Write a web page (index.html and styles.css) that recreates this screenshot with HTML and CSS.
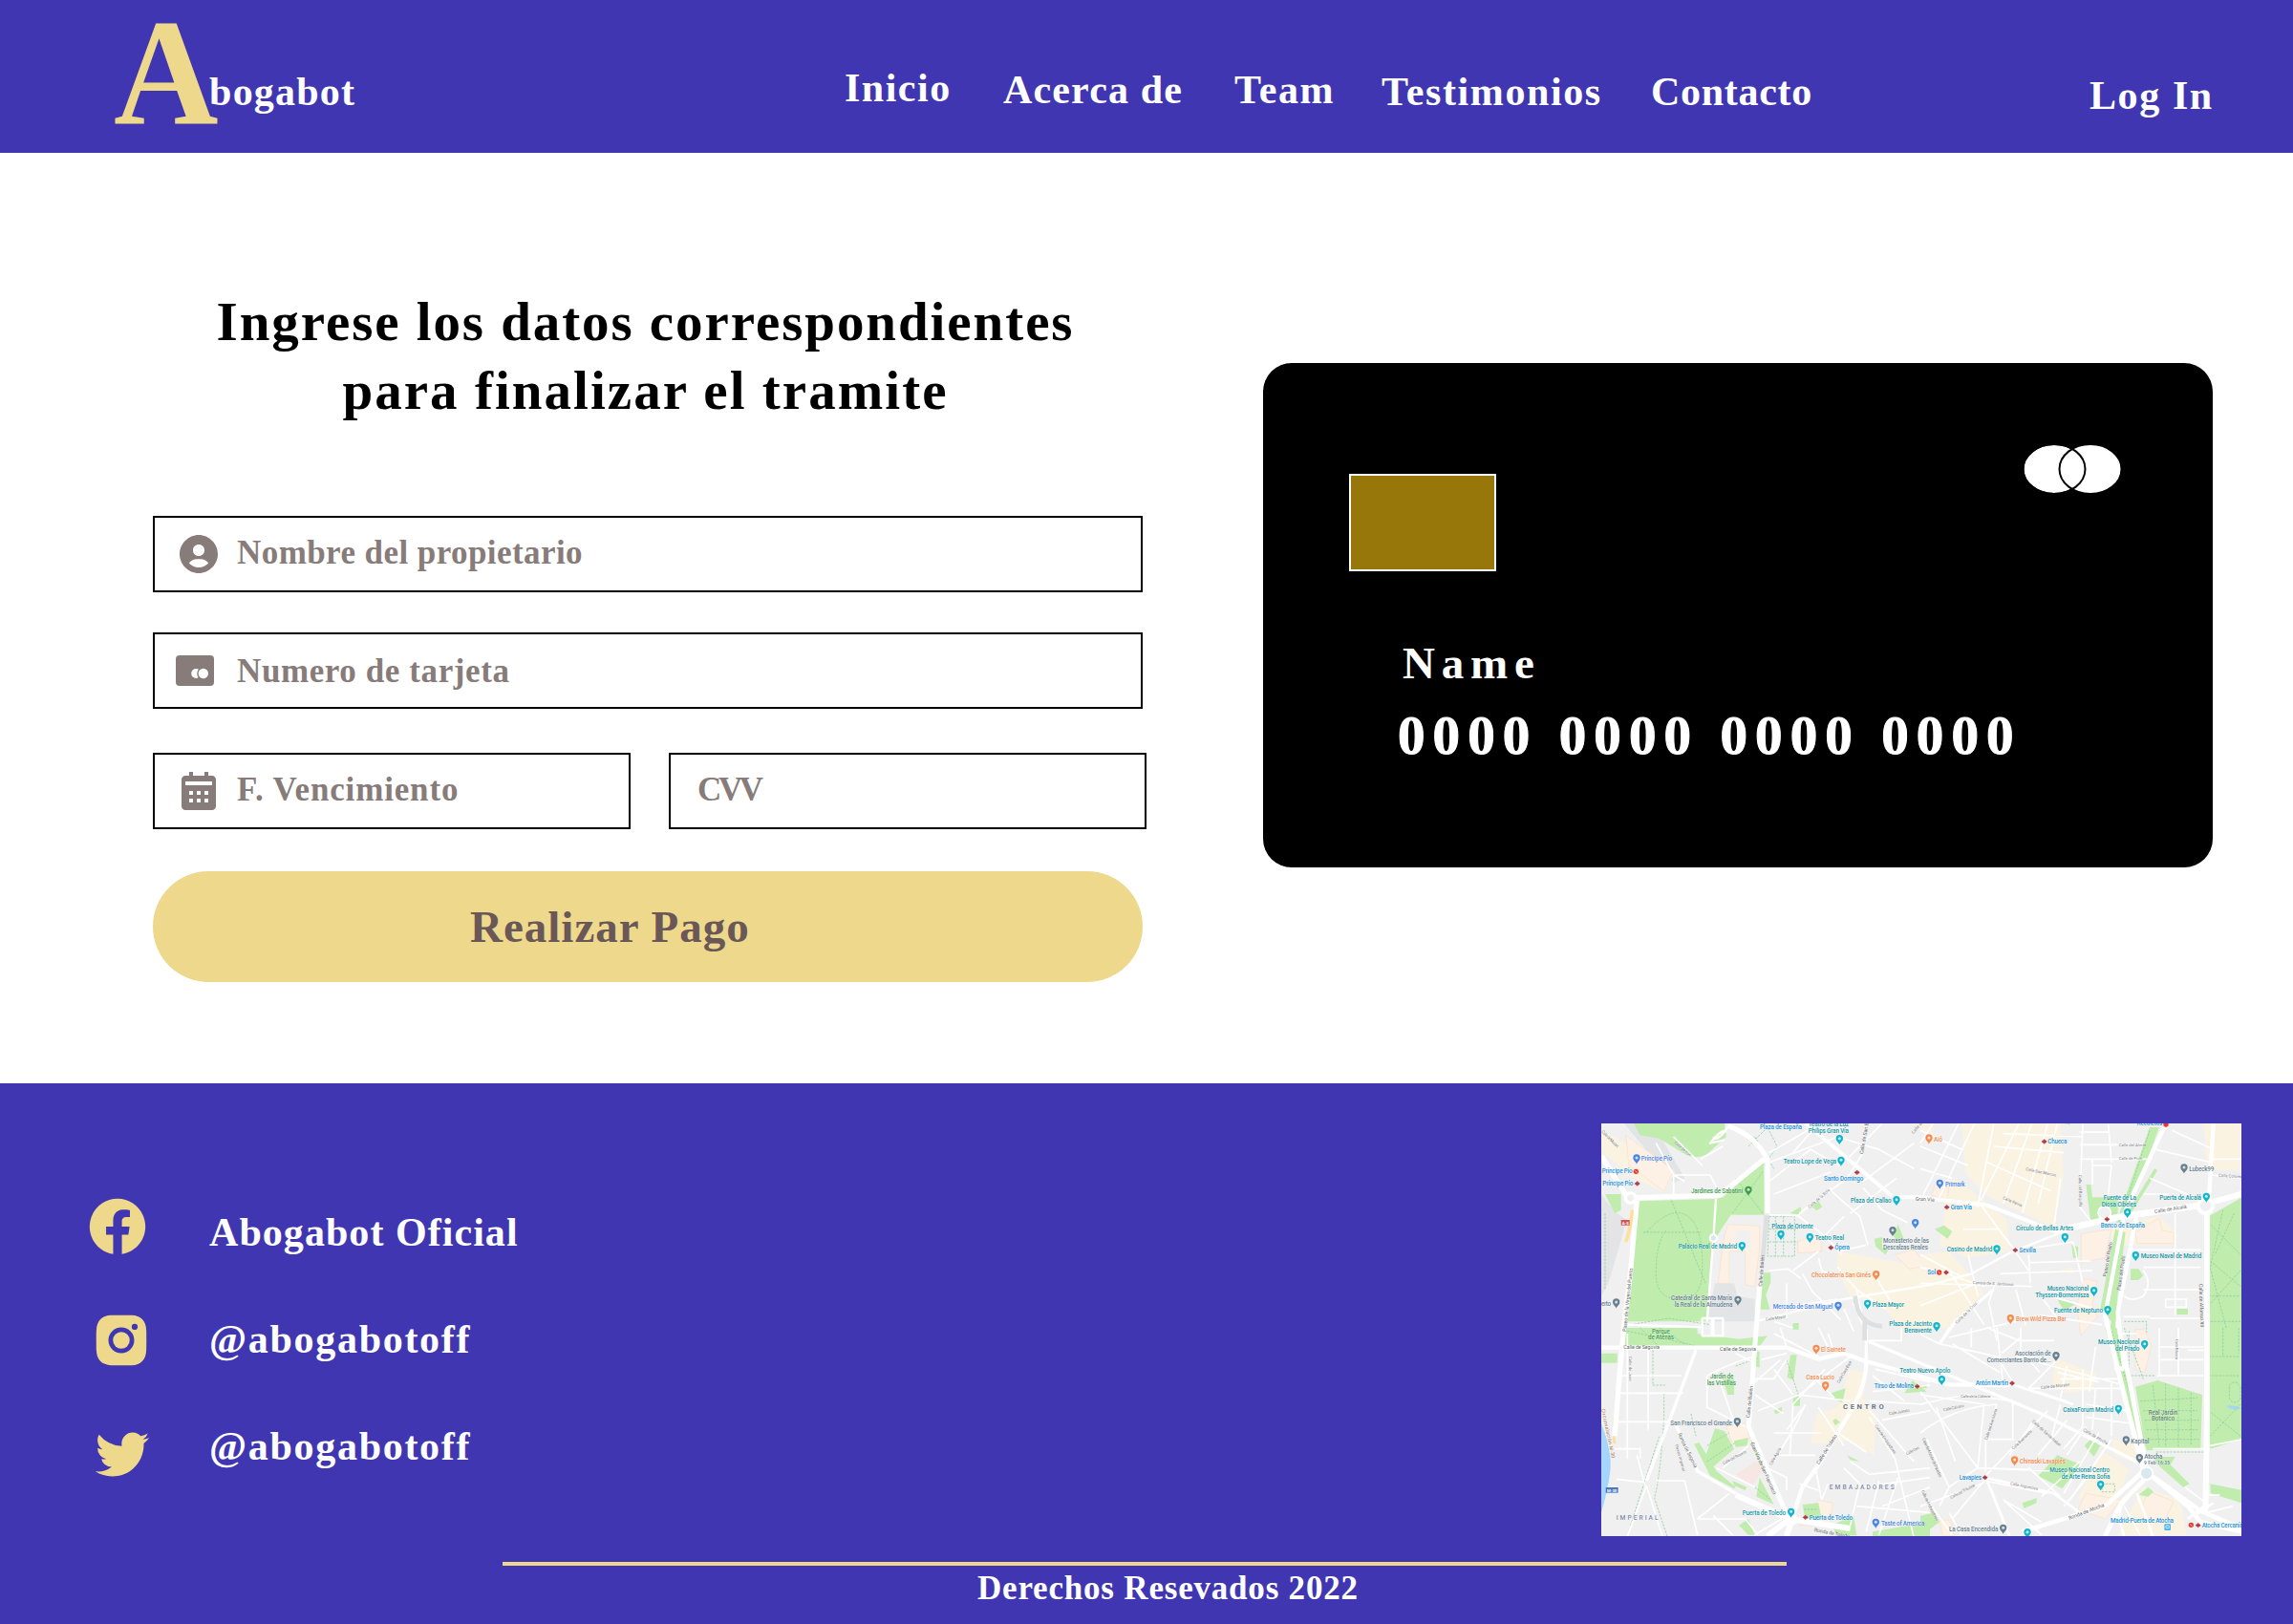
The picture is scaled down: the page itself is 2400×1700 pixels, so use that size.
FILE: index.html
```html
<!DOCTYPE html>
<html lang="es">
<head>
<meta charset="utf-8">
<title>Abogabot - Pago</title>
<link rel="stylesheet" href="styles.css">
</head>
<body>
<header class="topbar">
  <div class="logo"><span class="logo-initial">A</span><span class="logo-rest">bogabot</span></div>
  <nav class="menu">
    <a class="menu-inicio">Inicio</a>
    <a class="menu-acerca">Acerca de</a>
    <a class="menu-team">Team</a>
    <a class="menu-testimonios">Testimonios</a>
    <a class="menu-contacto">Contacto</a>
  </nav>
  <a class="login">Log In</a>
</header>

<main class="checkout">
  <form class="payment">
    <h1 class="title"><span class="title-first">Ingrese los datos correspondientes</span><span class="title-second">para finalizar el tramite</span></h1>
    <div class="field field-name">
      <svg class="field-icon" viewBox="0 0 24 24"><path d="M12 2C6.579 2 2 6.579 2 12s4.579 10 10 10 10-4.579 10-10S17.421 2 12 2zm0 5c1.727 0 3 1.272 3 3s-1.273 3-3 3c-1.726 0-3-1.272-3-3s1.274-3 3-3zm-5.106 9.772c.897-1.32 2.393-2.2 4.106-2.2h2c1.714 0 3.209.88 4.106 2.2C15.828 18.14 14.015 19 12 19s-3.828-.86-5.106-2.228z"/></svg>
      <span class="label-name">Nombre del propietario</span>
    </div>
    <div class="field field-number">
      <svg class="field-icon" viewBox="0 0 24 24"><rect x="2" y="4" width="20" height="16" rx="2"/><circle class="hole" cx="12.6" cy="13.5" r="2.5"/><circle cx="16.4" cy="13.5" r="3.3"/><circle class="hole" cx="16.4" cy="13.5" r="2.6"/></svg>
      <span class="label-number">Numero de tarjeta</span>
    </div>
    <div class="field-pair">
      <div class="field field-date">
        <svg class="field-icon" viewBox="0 0 24 24"><path fill-rule="evenodd" d="M19 4h-2V2h-2v2H9V2H7v2H5c-1.103 0-2 .897-2 2v14c0 1.103.897 2 2 2h14c1.103 0 2-.897 2-2V6c0-1.103-.897-2-2-2zM5 7h14v2H5zM7 12h2v2H7zM11 12h2v2h-2zM15 12h2v2h-2zM7 16h2v2H7zM11 16h2v2h-2zM15 16h2v2h-2z"/></svg>
        <span class="label-date">F. Vencimiento</span>
      </div>
      <div class="field field-cvv"><span class="label-cvv">CVV</span></div>
    </div>
    <button class="pay" type="button">Realizar Pago</button>
  </form>

  <section class="card">
    <div class="card-top">
      <div class="chip"></div>
      <svg class="brand" viewBox="0 0 106 56"><g><ellipse cx="34" cy="28" rx="32.5" ry="26"/><ellipse cx="72" cy="28" rx="32.5" ry="26"/><ellipse class="brand-line" cx="34" cy="28" rx="32.5" ry="26"/></g></svg>
    </div>
    <div class="card-name">Name</div>
    <div class="card-number">0000 0000 0000 0000</div>
  </section>
</main>

<footer class="footer">
  <div class="footer-main">
    <ul class="social">
      <li class="facebook"><svg viewBox="0 0 24 24"><path d="M12.001 2.002c-5.522 0-9.999 4.477-9.999 9.999 0 4.99 3.656 9.126 8.437 9.879v-6.988h-2.54v-2.891h2.54V9.798c0-2.508 1.493-3.891 3.776-3.891 1.094 0 2.24.195 2.24.195v2.459h-1.264c-1.24 0-1.628.772-1.628 1.563v1.875h2.771l-.443 2.891h-2.328v6.988C18.344 21.129 22 16.992 22 12.001c0-5.522-4.477-9.999-9.999-9.999z"/></svg><span>Abogabot Oficial</span></li>
      <li class="instagram"><svg viewBox="0 0 24 24"><circle cx="11.994" cy="11.979" r="3.003"/><path d="M20.947 8.305a6.53 6.53 0 0 0-.419-2.216 4.61 4.61 0 0 0-2.633-2.633 6.606 6.606 0 0 0-2.186-.42c-.962-.043-1.267-.055-3.709-.055s-2.755 0-3.71.055a6.606 6.606 0 0 0-2.185.42 4.607 4.607 0 0 0-2.633 2.633 6.554 6.554 0 0 0-.419 2.185c-.043.963-.056 1.268-.056 3.71s0 2.754.056 3.71c.015.748.156 1.486.419 2.187a4.61 4.61 0 0 0 2.634 2.632 6.584 6.584 0 0 0 2.185.45c.963.043 1.268.056 3.71.056s2.755 0 3.71-.056a6.59 6.59 0 0 0 2.186-.419 4.615 4.615 0 0 0 2.633-2.633c.263-.7.404-1.438.419-2.187.043-.962.056-1.267.056-3.71-.002-2.442-.002-2.752-.058-3.709zm-8.953 8.297c-2.554 0-4.623-2.069-4.623-4.623s2.069-4.623 4.623-4.623a4.623 4.623 0 0 1 0 9.246zm4.807-8.339a1.077 1.077 0 0 1-1.078-1.078 1.077 1.077 0 1 1 2.155 0c0 .596-.482 1.078-1.077 1.078z"/></svg><span>@abogabotoff</span></li>
      <li class="twitter"><svg viewBox="0 0 24 24"><path d="M19.633 7.997c.013.175.013.349.013.523 0 5.325-4.053 11.461-11.46 11.461-2.282 0-4.402-.661-6.186-1.809.324.037.636.05.973.05a8.07 8.07 0 0 0 5.001-1.721 4.036 4.036 0 0 1-3.767-2.793c.249.037.499.062.761.062.361 0 .724-.05 1.061-.137a4.027 4.027 0 0 1-3.23-3.953v-.05c.537.299 1.16.486 1.82.511a4.022 4.022 0 0 1-1.796-3.354c0-.748.199-1.434.548-2.032a11.457 11.457 0 0 0 8.306 4.215c-.062-.3-.1-.611-.1-.923a4.026 4.026 0 0 1 4.028-4.028c1.16 0 2.207.486 2.943 1.272a7.957 7.957 0 0 0 2.556-.973 4.02 4.02 0 0 1-1.771 2.22 8.073 8.073 0 0 0 2.319-.624 8.645 8.645 0 0 1-2.019 2.083z"/></svg><span>@abogabotoff</span></li>
    </ul>

    <svg class="map" viewBox="18 18 2010 1296">
      <defs>
        <g id="pin"><path d="M0 17C-2 9-11 6-11-3A11 11 0 0 1 11-3C11 6 2 9 0 17z"/><circle class="pin-dot" cy="-3" r="4.5"/></g>
        <g id="metro"><path class="metro-red" d="M0-8L9 0 0 8-9 0z"/><path class="metro-blue" d="M-6-1.5H6V1.5H-6z"/></g>
      </defs>
      <!-- north-west: land -->
      <g>
        <path class="water" d="M18 245q22 60 14 130T18 480z"/>
        <path class="grey" d="M18 240q40 60 80 80L70 420 40 520 18 560zM90 18h90L280 190 245 205z"/>
        <path class="cream" d="M18 40L60 60 250 170 215 235 120 190 18 105zM760 420L1050 470V660H960L900 590 800 560 760 480zM1000 18h60v60z"/>
        <path class="peach" d="M95 55L245 165 215 232 105 150zM635 390q50-30 75 0v30l-75 5zM940 430l60-15 40 50-55 10z"/>
        <path class="park" d="M120 18H405L410 60 350 115Q310 135 270 108L200 65 140 55zM30 240h50v50l-20 10zM135 262L378 255 400 250 528 135 530 305H425L395 350 370 390 350 640H100zM528 487h22v30l-15 40 12 45h-30zM610 300l35-20v25zM680 280l20-18 12 18-18 12zM935 370l15-35 18 45-20 10zM875 380l25-5v35l20 5-10 15-30-25zM620 645h18v20h-20z"/>
        <path class="grey" d="M528 305h18L530 440 515 530zM375 520h60l10 40 55 10v70H350z"/>
        <path class="peach" d="M415 335l100 5v70l-15 120-30-5V420h-50V520H385l15-130z"/>
        <path class="land" d="M440 355h45v55h-45zM420 435h48v85h-48z"/>
        <path class="trail" d="M160 360q60-70 110-60 70 20 65 180 0 90-70 90-80 0-75-90 0-90 35-130M230 240L345 520M150 360h180M30 300v240M440 190l85 110M430 300l95-130M545 310h80v125h-85zM565 310v125M590 310v125M545 350h90M545 390h90M480 90l60-60 30 60-40 60M500 60l60 100M110 650l120-20 130 20"/>
      </g>
      <!-- north-east: land -->
      <g transform="translate(1020 0)">
        <path class="cream" d="M130 18H440L450 180 420 345 200 240 140 170zM95 190L150 220 270 320 280 420 150 440 60 400zM0 430l90-10L200 550 100 660H0zM890 18h120V165H900zM430 480l50-10v20zM600 340l150-30 60 60-20 30H600z"/>
        <path class="peach" d="M45 210l45 10-5 35-50-10zM505 365l95-15-20 90-75 15zM675 360l75-45 10 40 35 5v35H680zM515 505l40 10-15 70 15 40-50 60-15-90z"/>
        <path class="park" d="M720 30h30L640 330H615zM735 160l10 5-80 130-10-5zM520 210h15l5 40h80v60l-85 20zM612 350l32 10-25 200-10 130H590L600 640 565 600zM905 310l105-60V700H895zM475 400l20 5v35h-15zM430 570l60 15-40 20zM660 475h25l15 20-15 15h-25zM805 600h35v18h-35zM45 350l30-12 25 20-15 22zM450 18h20v5z"/>
        <path class="trail" d="M720 40L625 330M630 365L585 600M905 330l100 100M910 450l95 80M905 590l100-110M950 290l-40 180 50 190M905 560h100M900 640h105M985 300l-60 130M640 640h70v40"/>
      </g>
      <!-- south-west: land -->
      <g transform="translate(0 660)">
        <path class="water" d="M18 300q35 90 28 150T18 580z"/>
        <path class="cream" d="M795 130l55 10-10 80 40 50-5 130-80-45-120 10 20-95 65-20z"/>
        <path class="yellow" d="M54 275l10 90-10-5z"/>
        <path class="peach" d="M410 310l60-10 15 50-55 15zM640 620l60-80 45 10-10 70z"/>
        <path class="pink" d="M440 460l60-40 30 15-35 60z"/>
        <path class="park" d="M90 18V0H320V60H90zM320 18L450 35 540 25 510 65 400 60H320zM18 80h50v30H18zM612 85h20l-10 80-20-10zM620 215h22v30h-22zM495 75h20v50l-15-5zM400 160h35v50h-20zM560 260l25-12v15l-20 8zM740 205l45-15-10 45-25-10zM310 365l15-5 55 90 60 50-5 5-75-40zM375 315l30 10 30 55-70 60-25-20zM435 355l45-10-5 25-35 5zM490 345l55 105-10 10-45-90zM505 530l10-60 45 85zM430 480l45 20-5 10-35-15zM650 555l50-5 10 50-50 15zM745 290l10-5 12 12-15 10zM740 620l70-30 10 62h-60zM450 620l30-20 20 50h-20zM790 400l40 20-30-5zM870 640l180-30v44H870z"/>
        <path class="park" d="M970 205l70-5-45-35z"/>
        <path class="trail" d="M100 10l210 45M140 0l60 60M200 0l80 50M180 70v110h38M215 205v70q-10 180-30 260l40 120M350 370l70-40M350 420l90-60M300 270l15 70M440 120l70-25M500 500l50 40M655 570h45M600 100l40 120M110 620l90-280"/>
      </g>
      <!-- south-east: land -->
      <g transform="translate(1020 660)">
        <path class="cream" d="M425 95l130 50-15 50-90 10-35-30zM600 350l90 20 0 60-80-30zM570 385l85 60-50 120-110-30zM700 500l115 40 20 110H620zM60 600l35 5 10 50H70z"/>
        <path class="peach" d="M675 5h30l20 50-20 85-30-10zM520 520l110 20-50 60-85-30zM700 545l20-30 75 30-30 65-65-10zM60 605l35-2 10 50H70z"/>
        <path class="park" d="M580 0h40l90 370-15 10zM675 185l70-20 140 45-5 170-170 5zM890 0h120V350l-100 30zM910 490l100 20v40l-98-30zM370 465l60-65 75 30-60 75zM515 370l20-20 30 20-20 35zM685 525l30-25 17 15-17 15zM730 405h70l-15 25 60 60-20 10-80-70zM320 550l45-15v15l-40 17zM0 590l45-10 15 30-60 45zM0 180h20v10H0z"/>
        <path class="water" d="M960 245q25-5 48 8-25 10-48-8z"/>
        <path class="trail" d="M640 0l60 160M655 10v140M690 230l180-10M700 260l170 0M705 290h170M710 320h165M715 350h160M730 180l20 190M770 175v200M810 190v185M850 205v165M640 150h100M600 10l100 340M905 90l95 0M905 150h100M950 0v90M1000 0v80M905 260l100 80M910 340l95-100M970 180q20-20 35 5v40q-25 20-35-5zM570 490l40 0v25h-40zM740 390h150"/>
      </g>

      <!-- minor streets -->
      <g class="street">
        <path d="M245 180h115l30 60M245 180L280 200M330 130l70-40M245 60l90 90M190 80l55 100v60M545 110L700 20M545 140L760 60M545 200l130-100 90 50M560 240l180-70M640 300L790 190 840 110M700 18L620 110M790 130L900 18M760 60l130 40 110 60M840 200L1000 80M800 300L945 190M840 220l60 70 80 40M545 305l90 3 80 60 60 60M635 308L740 220M740 230l90 80 25 90M720 370l60-60M760 420l90-20M700 440l10 40 60 20M545 480l60-5 40 30M620 480L700 420M650 490l30 55M560 600l200-30M600 520v110M680 545l90 90M760 470l60 70 20 100M820 540l90 60M880 500l60 100M780 600l30 70M560 640l60 20"/>
        <path transform="translate(1020 0)" d="M0 40l130 60M0 90l150 60M0 160l100 30M40 18L0 80M120 18L0 260M170 18L60 250M230 18L180 280M310 18L190 260M350 18L260 270M400 18L320 300M230 90l220 20M260 50l250 10M210 140l200 90M430 18L370 270M440 190L420 340M510 18L500 280 540 330M500 45h90M500 85h200M500 130h210M540 150h60M540 130v80M600 150l-10 90M590 20l10 120M790 40l130 60M740 100l170 40M720 190l140 60M700 240h80M135 350h110M180 260l110 150M270 380l70 100M350 410l130-20M345 455l190-5M250 490l290-10M340 430l5 90M235 520l-20 60 25 120M0 430l130 70M0 470l80 20 120 40M150 430l30 130M90 480L200 650M0 590l180-70M0 520l350 10M300 540l30 110M480 390l30 130M370 550l210 60M370 550l60 80M570 650L380 620 90 690M660 415h220M700 470h180M800 300v320M700 540h180M720 630h160M640 625h80M770 570h65v25h-65zM920 130h90M910 180l100 10M640 440v100M700 480q30 40 0 80-40 20-60 0"/>
        <path transform="translate(0 660)" d="M100 18l0 360M70 150h200M65 205h210M60 295h170M165 70v250M60 380h80v30M100 410v-30M190 480h90M65 475l90 10M155 495L130 400M160 495l-60 160M160 495l50 160M280 480l40 170M320 600l100-80M320 600h150l40 50M350 150q100-50 150-60M350 150v100l120 60M380 140l60 170M440 80l60 30M520 100L600 80M500 160h60l40-60M500 210l90 60M510 260l130-50 160 20M490 180l90-80M640 210L800 90M620 240L720 130M560 130l60 80M660 240L620 320 560 420M620 240l-10 160M560 330h150M560 400h130M540 440l60 30v40M600 320l60-80M690 160l60 60M700 250L780 370M760 330l90 60M860 230l170 10M860 260L1000 420M870 200L1050 180M860 280l80 130 60 250M900 290l150-30M800 420l60 40 190-20M780 440l60 60 210-30M830 490l-30 130M890 480l-40 160M950 470l-60 180M730 490l-20 50M690 440l20 100M640 490l60 20M900 560l150-60M820 560l230 20M400 440l80-70M380 440l120 60M370 590l60 60M500 650l100-60M730 18l20 60M700 0l30 60 120 50M580 0l20 60M850 40h110V0M880 130l170 40M870 150l100 80M560 18L700 90"/>
        <path transform="translate(1020 660)" d="M0 20l60 30 30-50M60 50l180 40 50 80M100 50l150 90M160 0v60M240 0l20 180M315 30l-60 50M315 0v70l60 70M210 0l100 40h110M430 100l-90 90M430 140l130 30M460 120l-20 100M510 130v180M550 60L530 200M440 160h190M340 190h290M300 90l340 90M0 240q80-20 150-30l140 20M0 210l200 30M200 240l-20 200M240 240L205 350v100M290 230v120M205 350h90M0 200L180 440M50 250l60 170M0 330q100-80 240-90M400 260L200 470M440 240l-30 110-40 50M460 290l-90 110M510 310l-60 70M520 310L460 400M560 330L450 520M600 350L470 540M350 300l-70 100M370 200l90 30M520 240l130 20M520 280l140 20M550 190l-10 130M600 170v170M0 510L100 650M20 350L90 500 60 560M90 500l90-60 160 5M0 560l190-70M100 600L200 480 400 520M180 440l240 10M340 440l100 90M260 540L380 650M260 540l120 70M220 500l60 150M90 580l40 70M500 420l-120 110M550 440L450 560M750 60h140M750 100h140M740 150h150M750 0v150M810 0v150M840 70h50M620 18h60M730 380h170M910 370l100-20M900 525h40M830 500l80 60M900 580l80-20M600 600l80-100M640 560l50 90"/>
      </g>

      <!-- main roads -->
      <g class="road">
        <path stroke-width="16" d="M18 120L100 250M110 252L390 243 530 130M130 260L108 500 88 665 72 850 60 1000"/>
        <path stroke-width="15" d="M415 25Q500 55 540 130V300M515 530L500 720 490 860 480 970 600 1245"/>
        <path stroke-width="12" d="M660 18L930 245M950 250h70L1230 275 1440 355"/>
        <path stroke-width="7" d="M378 255L370 380 350 640M415 30Q380 80 370 60 M405 70L360 80Q400 30 410 45M500 640L780 570 1050 525 1180 490 1300 425 1450 365"/>
        <path stroke-width="7" d="M100 650L330 658M335 630h30v55h-30zM370 630h30v55h-30z"/>
        <path stroke-width="20" d="M1440 358L1640 312 1780 292 1900 275"/>
        <path stroke-width="18" d="M1900 275L2028 240M1920 280v660l-5 300"/>
        <path stroke-width="13" d="M1940 18L1925 270M1785 30L1660 300 1600 620M1700 300L1640 610 1660 790"/>
        <path stroke-width="15" d="M1600 620L1640 790 1720 1110M1640 640L1730 1100M1630 788h30"/>
        <path stroke-width="13" d="M18 722H600L700 758 780 740 850 765 1110 838 1300 840M850 765Q850 850 790 940L700 1090 650 1160 620 1250"/>
        <path stroke-width="10" d="M315 730L240 930 160 1140M250 960L320 1110 440 1180M850 760V670L810 580M850 700L1400 930 1700 1080M1080 710L1130 640 1250 540"/>
        <path stroke-width="18" d="M440 1185L610 1260 800 1290M620 1250L600 1314M610 1260L540 1314"/>
        <path stroke-width="14" d="M1340 1300L1600 1220 1720 1110M1740 1120L1900 1235 2028 1290M1600 1314L1650 1210 1740 1120M1740 1120L1860 1220 1900 1270 2028 1300"/>
        <path stroke-width="8" d="M1650 1220Q1640 1260 1660 1314M1700 1180L1750 1314M1880 1250L1940 1210M1860 1260L1910 1220M1225 1130L1300 1314M1300 835L1500 900M1220 1130L1440 1180 1520 1240"/>
        <circle cx="110" cy="252" r="20"/><circle class="ring" cx="110" cy="252" r="11"/>
        <circle class="hub" cx="370" cy="378" r="11"/><circle class="hub" cx="1730" cy="1117" r="20"/><circle cx="615" cy="1262" r="18"/><circle cx="1915" cy="278" r="28"/><circle class="ring" cx="1915" cy="276" r="18"/>
        <circle class="ring" cx="1598" cy="298" r="20" stroke-width="5"/>
      </g>
      <path class="greyroad" d="M538 310L525 440M815 560Q820 650 900 655M845 640V700"/>
      <path class="yellowroad" d="M115 290Q110 350 95 390"/>

      <!-- street names -->
      <g class="street-name">
        <text transform="translate(96 672) rotate(-84)" textLength="200">Paseo de la Virgen del Puerto</text>
        <text transform="translate(523 530) rotate(-86)" textLength="98">Calle de Bailén</text>
        <text transform="translate(88 727)" textLength="113">Calle de Segovia</text>
        <text transform="translate(390 733)" textLength="114">Calle de Segovia</text>
        <text transform="translate(484 943) rotate(-84)" textLength="100">Calle de Bailén</text>
        <text transform="translate(258 993) rotate(64)" textLength="120">Ronda de Segovia</text>
        <text transform="translate(486 1022) rotate(66)" textLength="178">Gran Vía de San Francisco</text>
        <text transform="translate(702 1090) rotate(-58)" textLength="108">Calle de Toledo</text>
        <text transform="translate(686 1300) rotate(10)" textLength="112">Ronda de Toledo</text>
        <text transform="translate(840 115) rotate(-80)" textLength="100">Calle de San B</text>
        <text transform="translate(1004 260) rotate(3)" textLength="60">Gran Vía</text>
        <text transform="translate(1756 300) rotate(-9)" textLength="102">Calle de Alcalá</text>
        <text transform="translate(1604 500) rotate(-80)" textLength="110">Paseo del Prado</text>
        <text transform="translate(1648 543) rotate(-82)" textLength="110">Paseo del Prado</text>
        <text transform="translate(1895 522) rotate(88)" textLength="136">Calle de Alfonso XII</text>
        <text transform="translate(1488 1263) rotate(-21)" textLength="118">Ronda de Atocha</text>
        <text class="m30" transform="translate(18 915) rotate(78)" textLength="158">Circunvalación M-30</text>
      </g>
      <g class="minor-name">
        <text transform="translate(246 80) rotate(40)" textLength="65">Calle de Irún</text>
        <text transform="translate(18 45) rotate(45)" textLength="70">Calle de Mozart</text>
        <text transform="translate(672 285) rotate(-41)" textLength="86">Calle de la Bola</text>
        <text transform="translate(535 638) rotate(-9)" textLength="64">Calle Mayor</text>
        <text transform="translate(998 52) rotate(-50)" textLength="50">Calle de</text>
        <text transform="translate(1350 165) rotate(12)" textLength="98">Calle San Marcos</text>
        <text transform="translate(1278 255) rotate(23)" textLength="64">Calle Reina</text>
        <text transform="translate(1517 180) rotate(89)" textLength="100">Calle del Barquillo</text>
        <text transform="translate(1643 90)" textLength="86">Calle del Almte</text>
        <text transform="translate(1643 132)" textLength="74">Calle de Prim</text>
        <text transform="translate(1956 185) rotate(4)" textLength="76">Calle Colume</text>
        <text transform="translate(1184 522) rotate(3)" textLength="128">Carrera de S. Jerónimo</text>
        <text transform="translate(1135 648) rotate(-45)" textLength="90">Calle de la Cruz</text>
        <text transform="translate(104 750) rotate(90)" textLength="78">Calle de Juan</text>
        <text transform="translate(250 1028) rotate(74)" textLength="86">Paseo Imperial</text>
        <text transform="translate(402 1090) rotate(-28)" textLength="82">Calle del Rosario</text>
        <text transform="translate(553 1092) rotate(-60)" textLength="60">Calle Águila</text>
        <text transform="translate(765 835) rotate(-60)" textLength="78">Calle Cava Baja</text>
        <text transform="translate(922 934) rotate(-10)" textLength="66">Calle Juanelo</text>
        <text transform="translate(876 968) rotate(55)" textLength="108">Calle de Embajadores</text>
        <text transform="translate(978 1060) rotate(-28)" textLength="44">Calle Oso</text>
        <text transform="translate(1025 1008) rotate(66)" textLength="134">Calle del Mesón de Paredes</text>
        <text transform="translate(1022 1172) rotate(64)" textLength="106">Calle de Embajadores</text>
        <text transform="translate(1147 880)" textLength="92">Calle de la Cabeza</text>
        <text transform="translate(1093 922) rotate(-12)" textLength="66">Calle Calvario</text>
        <text transform="translate(1230 1013) rotate(-72)" textLength="102">Calle del Ave María</text>
        <text transform="translate(1312 1043) rotate(-44)" textLength="82">Calle Buenavista</text>
        <text transform="translate(1370 955) rotate(42)" textLength="116">Calle de Santa Isabel</text>
        <text transform="translate(1398 852) rotate(-6)" textLength="92">Calle de Moratín</text>
        <text transform="translate(1530 983) rotate(30)" textLength="88">Calle de Atocha</text>
        <text transform="translate(1302 1153) rotate(11)" textLength="88">Calle Argumosa</text>
        <text transform="translate(1117 1197) rotate(-28)" textLength="86">Calle del Tribulete</text>
        <text transform="translate(1822 696) rotate(90)" textLength="64">Calle Moreto</text>
      </g>

      <!-- pins -->
      <g class="pins">
        <g class="teal"><use href="#pin" x="766" y="68"/><use href="#pin" x="771" y="136"/><use href="#pin" x="945" y="260"/><use href="#pin" x="582" y="368"/><use href="#pin" x="673" y="377"/><use href="#pin" x="460" y="404"/><use href="#pin" x="854" y="586"/><use href="#pin" x="1474" y="377"/><use href="#pin" x="1260" y="414"/><use href="#pin" x="1918" y="250"/><use href="#pin" x="1670" y="299"/><use href="#pin" x="1696" y="434"/><use href="#pin" x="1565" y="545"/><use href="#pin" x="1608" y="605"/><use href="#pin" x="1071" y="656"/><use href="#pin" x="1087" y="824"/><use href="#pin" x="1724" y="713"/><use href="#pin" x="1642" y="916"/><use href="#pin" x="1586" y="1154"/><use href="#pin" x="614" y="1240"/><use href="#pin" x="1356" y="1304"/></g>
        <g class="green"><use href="#pin" x="480" y="229"/></g>
        <g class="blue"><use href="#pin" x="129" y="129"/><use href="#pin" x="1004" y="332"/><use href="#pin" x="762" y="592"/><use href="#pin" x="1081" y="208"/><use href="#pin" x="880" y="1273"/></g>
        <g class="slate"><use href="#pin" x="933" y="356"/><use href="#pin" x="447" y="574"/><use href="#pin" x="65" y="582"/><use href="#pin" x="1848" y="159"/><use href="#pin" x="445" y="956"/><use href="#pin" x="1446" y="749"/><use href="#pin" x="1666" y="1014"/><use href="#pin" x="1708" y="1070"/><use href="#pin" x="1280" y="1291"/></g>
        <g class="orange"><use href="#pin" x="881" y="494"/><use href="#pin" x="1047" y="66"/><use href="#pin" x="1303" y="632"/><use href="#pin" x="693" y="727"/><use href="#pin" x="722" y="843"/><use href="#pin" x="1316" y="1077"/></g>
        <use href="#metro" x="131" y="207"/><use href="#metro" x="821" y="172"/><use href="#metro" x="739" y="408"/><use href="#metro" x="1409" y="75"/><use href="#metro" x="1103" y="281"/><use href="#metro" x="1318" y="416"/><use href="#metro" x="1101" y="486"/><use href="#metro" x="1606" y="319"/><use href="#metro" x="1010" y="844"/><use href="#metro" x="1308" y="834"/><use href="#metro" x="1223" y="1130"/><use href="#metro" x="659" y="1255"/><use href="#metro" x="1892" y="1280"/>
        <circle class="rail" cx="127" cy="169" r="8"/><circle class="rail" cx="1079" cy="486" r="8"/><circle class="rail" cx="1791" cy="21" r="8"/><circle class="rail" cx="1870" cy="1279" r="8"/>
        <path class="rail-mark" d="M124 166l4 5h3M1076 483l4 5h3M1867 1276l4 5h3"/>
        <rect class="a5" x="80" y="321" width="27" height="17"/><rect class="m30-badge" x="32" y="1161" width="39" height="17"/><rect class="train" x="1786" y="1276" width="20" height="20" rx="3"/>
        <path class="rail-mark" d="M1791 1281h10v8h-10z"/>
      </g>
      <text class="badge" x="83" y="335" textLength="21">A-5</text>
      <text class="badge" x="36" y="1175" textLength="31">M-30</text>

      <!-- places -->
      <g class="place">
        <g class="teal">
          <text x="668" y="26" textLength="127">Teatro de la Luz</text><text x="668" y="47" textLength="127">Philips Gran Vía</text>
          <text x="590" y="143" textLength="166">Teatro Lope de Vega</text><text x="801" y="268" textLength="128">Plaza del Callao</text>
          <text x="553" y="347" textLength="131">Plaza de Oriente</text><text x="689" y="385" textLength="91">Teatro Real</text>
          <text x="260" y="411" textLength="184">Palacio Real de Madrid</text><text x="869" y="593" textLength="100">Plaza Mayor</text>
          <text x="922" y="655" textLength="134">Plaza de Jacinto</text><text x="970" y="676" textLength="86">Benavente</text>
          <text x="1320" y="355" textLength="181">Círculo de Bellas Artes</text><text x="1103" y="421" textLength="143">Casino de Madrid</text>
          <text x="1595" y="258" textLength="103">Fuente de La</text><text x="1589" y="278" textLength="109">Diosa Cibeles</text>
          <text x="1771" y="258" textLength="131">Puerta de Alcalá</text><text x="1712" y="442" textLength="191">Museo Naval de Madrid</text>
          <text x="1418" y="544" textLength="130">Museo Nacional</text><text x="1381" y="564" textLength="168">Thyssen-Bornemisza</text>
          <text x="1440" y="612" textLength="153">Fuente de Neptuno</text><text x="955" y="802" textLength="159">Teatro Nuevo Apolo</text>
          <text x="1578" y="712" textLength="130">Museo Nacional</text><text x="1632" y="733" textLength="76">del Prado</text>
          <text x="1468" y="923" textLength="158">CaixaForum Madrid</text><text x="1426" y="1113" textLength="188">Museo Nacional Centro</text>
          <text x="1463" y="1133" textLength="152">de Arte Reina Sofía</text><text x="461" y="1248" textLength="136">Puerta de Toledo</text>
        </g>
        <g class="metro-name">
          <text x="516" y="37" textLength="132">Plaza de España</text><text x="20" y="175" textLength="96">Príncipe Pío</text><text x="22" y="212" textLength="96">Príncipe Pío</text>
          <text x="717" y="198" textLength="124">Santo Domingo</text><text x="751" y="415" textLength="47">Ópera</text><text x="1420" y="81" textLength="60">Chueca</text>
          <text x="1115" y="288" textLength="67">Gran Vía</text><text x="1330" y="423" textLength="53">Sevilla</text><text x="1042" y="492" textLength="26">Sol</text>
          <text x="1586" y="345" textLength="139">Banco de España</text><text x="1700" y="25" textLength="80">Recoletos</text><text x="875" y="850" textLength="124">Tirso de Molina</text>
          <text x="1193" y="840" textLength="103">Antón Martín</text><text x="1142" y="1137" textLength="70">Lavapies</text><text x="671" y="1262" textLength="136">Puerta de Toledo</text>
          <text x="1617" y="1271" textLength="198">Madrid-Puerta de Atocha</text><text x="1904" y="1286" textLength="138">Atocha Cercanías</text>
        </g>
        <g class="blue"><text x="143" y="136" textLength="97">Príncipe Pío</text><text x="557" y="600" textLength="188">Mercado de San Miguel</text><text x="1098" y="215" textLength="62">Primark</text><text x="897" y="1281" textLength="136">Taste of America</text></g>
        <g class="green"><text x="300" y="237" textLength="162">Jardines de Sabatini</text><text x="177" y="677" textLength="57">Parque</text><text x="165" y="697" textLength="81">de Atenas</text><text x="359" y="820" textLength="74">Jardín de</text><text x="350" y="841" textLength="91">las Vistillas</text></g>
        <g class="darkgreen"><text x="1736" y="932" textLength="91">Real Jardín</text><text x="1746" y="952" textLength="72">Botánico</text></g>
        <g class="slate">
          <text x="237" y="573" textLength="192">Catedral de Santa María</text><text x="248" y="594" textLength="182">la Real de la Almudena</text><text x="18" y="590" textLength="30">erto</text>
          <text x="903" y="394" textLength="144">Monasterio de las</text><text x="903" y="415" textLength="141">Descalzas Reales</text><text x="1864" y="167" textLength="78">Lubeck99</text>
          <text x="235" y="965" textLength="194">San Francisco el Grande</text><text x="1317" y="747" textLength="113">Asociación de</text><text x="1229" y="767" textLength="201">Comerciantes Barrio de...</text>
          <text x="1681" y="1022" textLength="57">Kapital</text><text x="1723" y="1072" textLength="57">Atocha</text><text class="tiny" x="1722" y="1088" textLength="81">9 Feb 16:35</text><text x="1110" y="1300" textLength="154">La Casa Encendida</text>
        </g>
        <g class="orange"><text x="678" y="502" textLength="187">Chocolatería San Ginés</text><text x="1062" y="74" textLength="27">Aió</text><text x="1320" y="640" textLength="158">Brew Wild Pizza Bar</text><text x="708" y="735" textLength="78">El Sainete</text><text x="661" y="822" textLength="89">Casa Lucio</text><text x="1331" y="1085" textLength="145">Chinaski Lavapiés</text></g>
      </g>
      <g class="district"><text class="centro" x="777" y="914" textLength="128">CENTRO</text><text x="734" y="1166" textLength="204">EMBAJADORES</text><text x="65" y="1262" textLength="132">IMPERIAL</text></g>
    </svg>
  </div>
  <div class="rule"></div>
  <p class="copyright">Derechos Resevados 2022</p>
</footer>
</body>
</html>
```
FILE: styles.css
```css
* { box-sizing: border-box; }

body {
  margin: 0;
  width: 2400px;
  height: 1700px;
  overflow: hidden;
  background: #fff;
  font-family: "Liberation Serif", "Times New Roman", serif;
  font-weight: 700;
  font-size: 42px;
  line-height: 48px;
  white-space: nowrap;
}

/* Header */
.topbar {
  display: grid;
  grid-template-columns: 764px 1303px 213px;
  height: 160px;
  padding-left: 120px;
  background: #4136b1;
  color: #fff;
}
.logo { display: flex; }
.logo-initial {
  margin: -3px -14px 0 -1px;
  font-size: 158px;
  line-height: 160px;
  color: #edd88b;
  transform: scaleX(.96);
  transform-origin: left;
}
.logo-rest { padding-top: 72px; letter-spacing: 1.2px; }
.menu {
  display: grid;
  grid-template-columns: 166px 242px 154px 282px 200px;
}
.menu-inicio { padding-top: 68px; letter-spacing: 1.5px; }
.menu-acerca { padding-top: 70px; letter-spacing: 1.17px; }
.menu-team { padding-top: 70px; letter-spacing: 1.6px; }
.menu-testimonios { padding-top: 72px; letter-spacing: 1.6px; }
.menu-contacto { padding-top: 72px; letter-spacing: .7px; }
.login { padding-top: 76px; letter-spacing: 1.6px; }

/* Payment form */
.checkout {
  display: grid;
  grid-template-columns: 1040px 994px;
  column-gap: 122px;
  height: 974px;
  padding-left: 160px;
  align-items: start;
}
.title {
  display: flex;
  flex-direction: column;
  align-items: center;
  width: 1031px;
  margin: 141px 0 95px;
  font-size: 57px;
  line-height: 72px;
}
.title-first { letter-spacing: 1.93px; }
.title-second { letter-spacing: 2.04px; }
.field {
  display: flex;
  width: 1036px;
  height: 80px;
  border: 2px solid #000;
  color: #877c7a;
  font-size: 35px;
  line-height: 40px;
}
.field-icon { width: 48px; height: 48px; fill: #877c7a; flex: none; }
.field-icon .hole { fill: #fff; }
.field-name .field-icon { margin: 14px 16px 0 22px; }
.field-number .field-icon { margin: 14px 20px 0 18px; }
.field-date .field-icon { margin: 14px 16px 0 22px; }
.field-number { margin: 42px 0 46px; }
.field-pair { display: flex; gap: 40px; margin-bottom: 44px; }
.field-date, .field-cvv { width: 500px; }
.label-name { padding-top: 17px; letter-spacing: .43px; }
.label-number { padding-top: 19px; letter-spacing: .6px; }
.label-date { padding-top: 17px; letter-spacing: .85px; }
.label-cvv { padding: 17px 0 0 28px; letter-spacing: -3.4px; }
.pay {
  display: block;
  width: 1036px;
  height: 116px;
  padding: 0 0 0 332px;
  border: 0;
  border-radius: 58px;
  background: #edd88b;
  color: #6a5757;
  font: 700 47px/112px "Liberation Serif", "Times New Roman", serif;
  letter-spacing: 1px;
  text-align: left;
}

/* Card preview */
.card {
  height: 528px;
  margin-top: 220px;
  border-radius: 30px;
  background: #000;
  color: #fff;
}
.card-top { display: flex; justify-content: space-between; height: 292px; padding: 83px 94px 0 90px; }
.chip { width: 154px; height: 102px; margin-top: 33px; border: 2px solid #fff; background: #97770a; }
.brand { width: 106px; height: 56px; fill: #fff; stroke: #000; stroke-width: 2; }
.brand-line { fill: none; }
.card-name { padding-left: 146px; font-size: 47px; line-height: 44px; letter-spacing: 6.8px; }
.card-number { margin-top: 24px; padding-left: 141px; font-size: 57px; line-height: 60px; letter-spacing: 8.1px; -webkit-text-stroke: 1px #fff; }

/* Footer */
.footer { height: 566px; padding-top: 42px; background: #4136b1; color: #fff; }
.footer-main { display: flex; justify-content: space-between; height: 459px; padding: 0 54px 0 88px; }
.social { margin: 72px 0 0; padding: 0; list-style: none; }
.social li { display: flex; height: 112px; align-items: flex-start; }
.social svg { width: 70px; height: 70px; fill: #edd88b; flex: none; }
.social span { padding-top: 18px; letter-spacing: 1.7px; }
.social .facebook svg { margin: 1px 61px 0 0; }
.social .facebook span { letter-spacing: 1.05px; }
.social .instagram svg { margin: 8px 57px 0 4px; }
.social .twitter svg { width: 69px; height: 69px; margin: 16px 56px 0 6px; }
.rule { width: 1344px; height: 4px; margin-left: 526px; background: #edd88b; }
.copyright { margin: 4px 0 0; padding-left: 1023px; font-size: 35px; line-height: 40px; letter-spacing: .8px; }

/* Map */
.map { width: 670px; height: 432px; background: #f0f0f0; font-family: Roboto, sans-serif; font-weight: 400; }
.map .water { fill: #a5d5fb; }
.map .cream { fill: #faf3e2; }
.map .peach { fill: #fdf0e5; stroke: #f8dfc9; stroke-width: 2; }
.map .pink { fill: #f6e7e5; }
.map .park { fill: #c0ecae; }
.map .grey { fill: #e3e4e6; }
.map .land { fill: #f0f0f0; }
.map .yellow { fill: #fde09a; }
.map .trail { fill: none; stroke: #8fd0a0; stroke-width: 2.5; stroke-dasharray: 7 4; }
.map .street { fill: none; stroke: #fff; stroke-width: 5; }
.map .road { fill: none; stroke: #fff; stroke-linejoin: round; }
.map .road circle { fill: #fff; }
.map .road .ring { fill: #f0f0f0; }
.map .road .hub { fill: #d9e7ee; stroke-width: 6; }
.map .greyroad { fill: none; stroke: #dedfe1; stroke-width: 14; }
.map .yellowroad { fill: none; stroke: #fde09a; stroke-width: 11; }
.street-name, .minor-name, .place, .district { paint-order: stroke; stroke: #fff; stroke-opacity: .6; stroke-width: 2px; }
.street-name { font-size: 16px; fill: #5c5f63; }
.street-name .m30 { fill: #9b7052; }
.minor-name { font-size: 13px; fill: #77797c; }
.place { font-size: 19px; font-weight: 500; }
.place .tiny { font-size: 15px; }
.map .teal { fill: #1596a5; }
.pins .teal { fill: #12b5cb; }
.map .green { fill: #3f9c4c; }
.map .darkgreen { fill: #5c8466; }
.map .blue { fill: #4a86e0; }
.map .slate { fill: #67808f; }
.map .orange { fill: #f28b50; }
.map .metro-name { fill: #1d92d8; }
.map .pin-dot { fill: #fff; opacity: .75; }
.map .metro-red { fill: #ea3f38; }
.map .metro-blue { fill: #35558c; }
.map .rail { fill: #e8372e; }
.map .rail-mark { fill: none; stroke: #fff; stroke-width: 2; }
.map .a5 { fill: #d0545a; }
.map .m30-badge { fill: #4a78c0; }
.map .train { fill: #48b4f0; }
.map .badge { fill: #fff; font-size: 13px; font-weight: 700; }
.district { font-size: 20px; font-weight: 500; fill: #7d8ba3; }
.district .centro { font-size: 23px; font-weight: 700; fill: #66758c; }
```
